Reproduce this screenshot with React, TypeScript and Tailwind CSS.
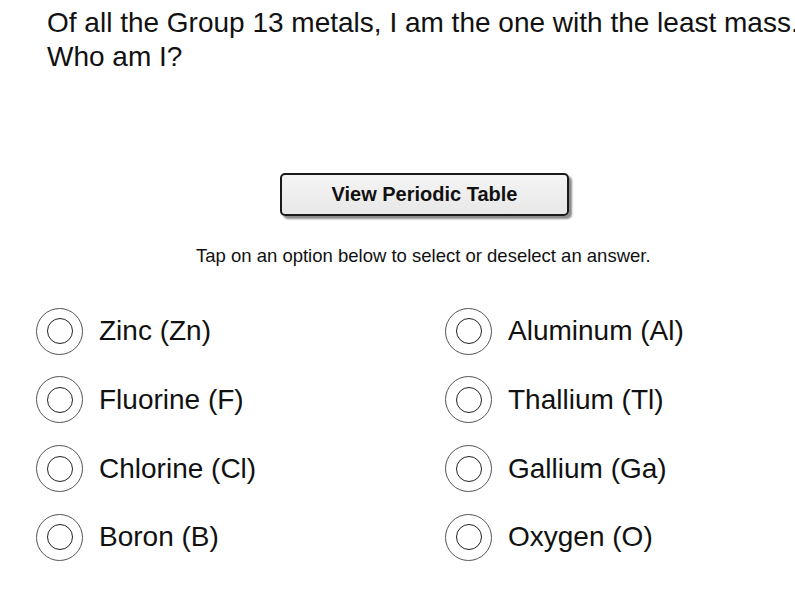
import React from "react";

const left = ["Zinc (Zn)", "Fluorine (F)", "Chlorine (Cl)", "Boron (B)"];
const right = ["Aluminum (Al)", "Thallium (Tl)", "Gallium (Ga)", "Oxygen (O)"];

function Radio() {
  return (
    <div className="flex h-[47px] w-[47px] shrink-0 items-center justify-center rounded-full border border-[#555]">
      <div className="h-[26px] w-[26px] rounded-full border-[1.5px] border-[#222]" />
    </div>
  );
}

function Option({ label }: { label: string }) {
  return (
    <div className="flex h-[68.67px] items-center">
      <Radio />
      <span className="ml-[16px] whitespace-nowrap text-[28px] leading-none text-[#111]">{label}</span>
    </div>
  );
}

export default function App() {
  return (
    <div
      className="h-[608px] w-[795px] overflow-hidden bg-white text-[#111]"
      style={{ fontFamily: '"Liberation Sans", Arial, sans-serif' }}
    >
      <div className="flex w-[848px] flex-col">
        <div className="whitespace-nowrap pl-[47px] pt-[6px] text-[28px] leading-[34px]">
          <div>Of all the Group 13 metals, I am the one with the least mass.</div>
          <div>Who am I?</div>
        </div>
        <div className="mt-[99px] flex justify-start pl-[280px]">
          <button className="h-[43px] w-[289px] rounded-[5px] border-2 border-[#1a1a1a] bg-gradient-to-b from-[#f4f4f4] to-[#e8e8e8] pb-[2px] text-[20px] font-bold text-[#111] shadow-[3px_3px_2px_rgba(0,0,0,0.45)]">
            View Periodic Table
          </button>
        </div>
        <div className="mt-[29px] whitespace-nowrap pl-[196px] text-[18.5px] leading-[22px]">
          Tap on an option below to select or deselect an answer.
        </div>
        <div className="mt-[30px] grid grid-cols-[409px_409px] pl-[36px]">
          <div className="flex flex-col">
            {left.map((l) => (
              <Option key={l} label={l} />
            ))}
          </div>
          <div className="flex flex-col">
            {right.map((l) => (
              <Option key={l} label={l} />
            ))}
          </div>
        </div>
      </div>
    </div>
  );
}
